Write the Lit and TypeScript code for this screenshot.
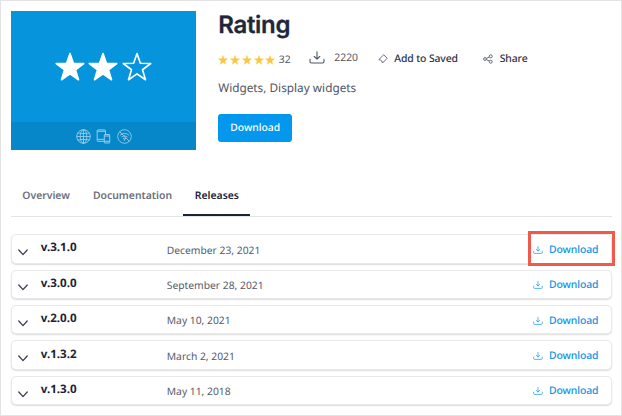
import { LitElement, html, css } from "lit";
import { customElement, property } from "lit/decorators.js";

const STAR = "M12 1.2 L14.7 9 L23 9.2 L16.4 14.2 L18.8 22.2 L12 17.5 L5.2 22.2 L7.6 14.2 L1 9.2 L9.3 9 Z";

const downloadIcon = html`<svg viewBox="0 0 16 13" fill="none" stroke="currentColor" stroke-width="1.1" stroke-linecap="round" stroke-linejoin="round">
  <path d="M8 .7V8M5.2 5.5 8 8.2l2.8-2.7M1 8.3v2.2a1.5 1.5 0 0 0 1.5 1.5h11A1.5 1.5 0 0 0 15 10.5V8.3" />
</svg>`;

@customElement("release-row")
export class ReleaseRow extends LitElement {
  @property() version = "";
  @property() date = "";
  @property({ type: Boolean }) marked = false;

  static styles = css`
    :host { display: block; }
    .row {
      position: relative; box-sizing: border-box; height: 29.4px; display: flex; align-items: flex-start;
      border: 1px solid #e9e9eb; border-radius: 5px; background: #fff;
      box-shadow: 0 1px 1.5px rgba(0, 0, 0, 0.14);
    }
    .chevron { width: 10px; height: 7px; margin: 13.8px 0 0 6.6px; flex: none; color: #3a4154; }
    .version { width: 126px; margin: 4.2px 0 0 12.6px; font-size: 11.6px; line-height: 18px; font-weight: 700; color: #1c2336; }
    .date { flex: 1; margin-top: 7.4px; font-size: 10.3px; line-height: 16px; color: #555b6b; }
    .link { display: flex; margin: 6.6px 12.6px 0 0; color: #0b93e6; font-size: 10.4px; letter-spacing: -0.1px; line-height: 16px; font-weight: 500; }
    .link svg { width: 10px; height: 8px; margin: 4px 6.5px 0 0; }
    .mark { position: absolute; box-sizing: border-box; right: -4px; top: -4.5px; width: 87px; height: 35px; border: 3px solid #f05a4b; }
  `;

  render() {
    return html`<div class="row">
      <svg class="chevron" viewBox="0 0 10 7" fill="none" stroke="currentColor" stroke-width="1.3" stroke-linecap="round" stroke-linejoin="round"><path d="M.8 1 5 5.6 9.2 1" /></svg>
      <span class="version">${this.version}</span>
      <span class="date">${this.date}</span>
      <span class="link">${downloadIcon}<span>Download</span></span>
      ${this.marked ? html`<div class="mark"></div>` : ""}
    </div>`;
  }
}

@customElement("app-root")
export class AppRoot extends LitElement {
  static styles = css`
    :host {
      display: block; box-sizing: border-box; width: 622px; height: 416px; overflow: hidden;
      border: 1px solid #e3e3e3; background: #fff; padding: 9.5px 9px 0 9.6px;
      font-family: "Noto Sans", "Open Sans", sans-serif; color: #4f5566;
      text-rendering: geometricPrecision;
    }
    .hero { display: flex; height: 139.5px; }
    .cover { width: 185.3px; display: flex; flex-direction: column; background: #0695dd; flex: none; }
    .stars { height: 111.5px; display: flex; justify-content: center; gap: 3.5px; padding-top: 41px; box-sizing: border-box; }
    .stars svg { width: 30px; height: 30px; }
    .platforms { flex: 1; display: flex; justify-content: center; align-items: center; gap: 5.5px; padding-left: 1px; background: #0587c9; color: #a5d5ee; }
    .platforms svg { width: 15px; height: 15px; }
    .info { margin-left: 22.3px; flex: 1; }
    .title { margin: -2px 0 0; font: 600 24px/32px Inter, "Noto Sans", sans-serif; letter-spacing: -0.3px; color: #1f2738; -webkit-text-stroke: 0.3px #1f2738; }
    .meta { display: flex; height: 20px; margin-top: 7px; font-size: 10.4px; line-height: 23px; }
    .rating { display: flex; width: 90.5px; }
    .rating svg { width: 10px; height: 10px; margin: 7px 1.8px 0 0; color: #fbc642; }
    .count { margin: 1px 0 0 1.6px; }
    .downloads { display: flex; width: 69px; }
    .downloads svg { width: 16px; height: 13px; margin: 3.5px 9.6px 0 0; }
    .downloads span { line-height: 21.4px; }
    .action { display: flex; font-weight: 500; letter-spacing: -0.1px; color: #2b3245; }
    .action svg { width: 10px; height: 10px; margin: 6px 6.5px 0 0; color: #555b6b; }
    .save { width: 105.5px; }
    .category { margin-top: 10px; font-size: 11.8px; line-height: 20px; }
    .button { display: flex; justify-content: center; align-items: center; box-sizing: border-box; width: 74px; height: 28px; margin-top: 16.2px; padding-top: 1px;
      border-radius: 3px; background: #0398ee; color: #fff; font-size: 10.3px; font-weight: 500; }
    .tabs { display: flex; box-sizing: border-box; height: 36px; margin-top: 30.5px; border-bottom: 1px solid #e3e4e7; font-size: 10.4px; line-height: 31px; font-weight: 600; color: #6a7080; }
    .tab { box-sizing: border-box; height: 35.5px; text-align: center; }
    .overview { width: 71px; }
    .documentation { width: 101.8px; }
    .active { width: 67px; color: #1c2336; border-bottom: 2px solid #1c2336; }
    .list { display: flex; flex-direction: column; gap: 6px; margin-top: 17.7px; }
  `;

  render() {
    return html`
      <div class="hero">
        <div class="cover">
          <div class="stars">
            ${[true, true, false].map((filled) => html`<svg viewBox="0 0 24 24" stroke="#fff" stroke-width="1.3" fill=${filled ? "#fff" : "none"} stroke-linejoin="round"><path d=${STAR} /></svg>`)}
          </div>
          <div class="platforms">
            <svg viewBox="0 0 15 15" fill="none" stroke="currentColor" stroke-width=".8"><circle cx="7.5" cy="7.5" r="6.8" /><ellipse cx="7.5" cy="7.5" rx="3.3" ry="6.8" /><path d="M7.5 .7v13.6M.7 7.5h13.6M1.7 4q5.8 1.3 11.6 0M1.7 11q5.8-1.3 11.6 0" /></svg>
            <svg viewBox="0 0 15 15" fill="none" stroke="currentColor" stroke-width=".9"><path d="M8 12.3H2A.8.8 0 0 1 1.2 11.5V1.7A.8.8 0 0 1 2 .9h6.7a.8.8 0 0 1 .8.8V5M1.2 2.3h8.3M1.2 10.3H8M8.9 5.5h4.2a.6.6 0 0 1 .6.6v7.3a.6.6 0 0 1-.6.6H8.9a.6.6 0 0 1-.6-.6V6.1a.6.6 0 0 1 .6-.6ZM8.3 7h5.4M8.3 12.3h5.4" /></svg>
            <svg viewBox="0 0 15 15" fill="none" stroke="currentColor" stroke-width=".8"><circle cx="7.5" cy="7.5" r="6.8" /><path d="m2.6 2.6 9.8 9.8M3 6.2q4.5-3.7 9 0M4.5 8q3-2.4 6 0M6 9.7q1.5-1.1 3 0" /><circle cx="7.5" cy="11" r=".5" /></svg>
          </div>
        </div>
        <div class="info">
          <h1 class="title">Rating</h1>
          <div class="meta">
            <div class="rating">
              ${[1, 2, 3, 4, 5].map(() => html`<svg viewBox="0 0 24 24" fill="currentColor" stroke="currentColor" stroke-linejoin="round"><path d=${STAR} /></svg>`)}
              <span class="count">32</span>
            </div>
            <div class="downloads">${downloadIcon}<span>2220</span></div>
            <div class="action save">
              <svg viewBox="0 0 10 10" fill="none" stroke="currentColor" stroke-width=".9" stroke-linejoin="round"><path d="M5.7.8 9.2 4.3 4.5 9 3.8 7 2.8 6.2.8 5.6Z" /></svg>
              <span>Add to Saved</span>
            </div>
            <div class="action">
              <svg viewBox="0 0 10 10" fill="none" stroke="currentColor" stroke-width=".9"><circle cx="2" cy="5" r="1.4" /><circle cx="7.7" cy="2.3" r="1.5" /><circle cx="7.7" cy="7.7" r="1.5" /><path d="m3.3 4.4 3-1.4M3.3 5.6l3 1.4" /></svg>
              <span>Share</span>
            </div>
          </div>
          <div class="category">Widgets, Display widgets</div>
          <div class="button">Download</div>
        </div>
      </div>
      <div class="tabs">
        <div class="tab overview">Overview</div>
        <div class="tab documentation">Documentation</div>
        <div class="tab active">Releases</div>
      </div>
      <div class="list">
        <release-row version="v.3.1.0" date="December 23, 2021" marked></release-row>
        <release-row version="v.3.0.0" date="September 28, 2021"></release-row>
        <release-row version="v.2.0.0" date="May 10, 2021"></release-row>
        <release-row version="v.1.3.2" date="March 2, 2021"></release-row>
        <release-row version="v.1.3.0" date="May 11, 2018"></release-row>
      </div>
    `;
  }
}
